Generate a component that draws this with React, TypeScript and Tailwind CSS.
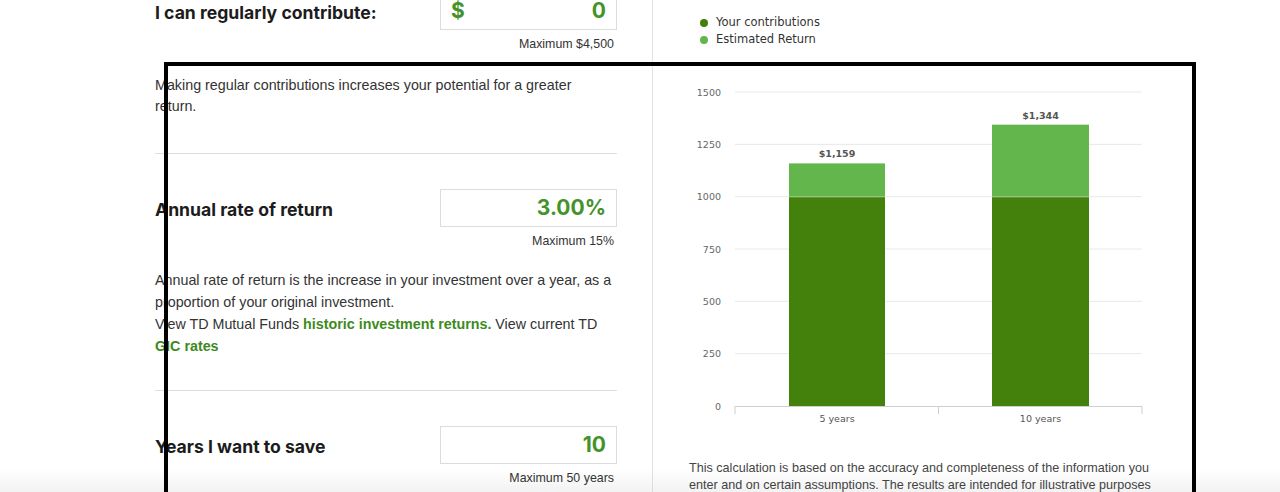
const GREEN_DARK = '#43800c';
const GREEN_LIGHT = '#62b64b';

const yTicks = [0, 250, 500, 750, 1000, 1250, 1500];
const zeroY = 326;
const scale = 52.33 / 250;
const bars = [
  { label: '5 years', total: 1159, contrib: 1000, x: 110, w: 96, center: 158, text: '$1,159' },
  { label: '10 years', total: 1344, contrib: 1000, x: 313, w: 97, center: 361.5, text: '$1,344' },
];

function InputRow({ label, value, prefix }: { label: string; value: string; prefix?: string }) {
  return (
    <div className="flex items-center justify-between">
      <h3 className="pt-[4px] text-[17.6px] font-bold text-[#1c1c1c]" style={{ fontFamily: 'Inter, "Noto Sans", sans-serif' }}>
        {label}
      </h3>
      <div className="flex h-[38px] w-[177px] items-center justify-between border border-[#dcdcdc] bg-white px-[10px]">
        <span className="text-[21px] font-bold text-[#44922a]" style={{ fontFamily: 'Inter, sans-serif' }}>{prefix ?? ''}</span>
        <span className="text-[21px] font-bold text-[#44922a]" style={{ fontFamily: 'Inter, sans-serif' }}>{value}</span>
      </div>
    </div>
  );
}

function MaxNote({ children }: { children: React.ReactNode }) {
  return (
    <p className="mt-[6px] pr-[3px] text-right text-[12.4px] leading-4 text-[#333]">{children}</p>
  );
}

function Chart() {
  return (
    <svg width="480" height="350" className="block" style={{ fontFamily: '"DejaVu Sans", Verdana, sans-serif' }}>
      {yTicks.map((t) => {
        const y = zeroY - t * scale;
        return (
          <g key={t}>
            {t > 0 && <line x1={56} x2={463} y1={y} y2={y} stroke="#e8e8e8" strokeWidth={1} />}
            <text x={42} y={y + 3.5} textAnchor="end" fontSize="9.5" fill="#666">{t}</text>
          </g>
        );
      })}
      {bars.map((b) => {
        const top = zeroY - b.total * scale;
        const mid = zeroY - b.contrib * scale;
        return (
          <g key={b.label}>
            <rect x={b.x} y={top} width={b.w} height={mid - top} fill={GREEN_LIGHT} />
            <rect x={b.x} y={mid + 0.5} width={b.w} height={zeroY - mid - 0.5} fill={GREEN_DARK} />
            <text x={b.center} y={top - 6} textAnchor="middle" fontSize="9.5" fontWeight="600" fill="#555">{b.text}</text>
            <text x={b.center} y={342} textAnchor="middle" fontSize="9.5" fill="#555">{b.label}</text>
          </g>
        );
      })}
      <line x1={56} x2={463} y1={zeroY + 0.5} y2={zeroY + 0.5} stroke="#cfcfcf" />
      {[56, 259.5, 463].map((x) => (
        <line key={x} x1={x} x2={x} y1={zeroY} y2={zeroY + 8} stroke="#cfcfcf" />
      ))}
    </svg>
  );
}

export default function App() {
  return (
    <div className="relative h-[492px] w-full overflow-hidden bg-white" style={{ fontFamily: '"Liberation Sans", Arial, sans-serif' }}>
      <div className="-mt-2 flex pl-[155px]">
        {/* Left: inputs */}
        <div className="w-[462px] shrink-0">
          <InputRow label="I can regularly contribute:" value="0" prefix="$" />
          <MaxNote>Maximum $4,500</MaxNote>
          <p className="mt-[23px] w-[458px] text-[14.3px] leading-[21px] text-[#333]">
            Making regular contributions increases your potential for a greater return.
          </p>
          <div className="mt-[36px] border-t border-[#dedede]" />

          <div className="mt-[35px]">
            <InputRow label="Annual rate of return" value="3.00%" />
          </div>
          <MaxNote>Maximum 15%</MaxNote>
          <p className="mt-[20px] w-[458px] text-[14.3px] leading-[22px] text-[#333]">
            Annual rate of return is the increase in your investment over a year, as a proportion of your original investment.
            <br />
            View TD Mutual Funds <a className="font-bold text-[#3d8a1d]">historic investment returns.</a> View current TD{' '}
            <a className="font-bold text-[#3d8a1d]">GIC rates</a>
          </p>
          <div className="mt-[33px] border-t border-[#dedede]" />

          <div className="mt-[35px]">
            <InputRow label="Years I want to save" value="10" />
          </div>
          <MaxNote>Maximum 50 years</MaxNote>
        </div>

        {/* Right: chart */}
        <div className="ml-[35px] h-[520px] border-l border-[#e4e4e4] pl-[36px] pt-[22px]">
          <ul className="text-[11.5px] leading-[17px] text-[#333]" style={{ fontFamily: '"DejaVu Sans", Verdana, sans-serif' }}>
            <li className="flex items-center gap-[8px] pl-[11px]">
              <span className="h-[8px] w-[8px] rounded-full bg-[#43800c]" />
              Your contributions
            </li>
            <li className="flex items-center gap-[8px] pl-[11px]">
              <span className="h-[8px] w-[8px] rounded-full bg-[#62b64b]" />
              Estimated Return
            </li>
          </ul>
          <div className="-ml-[10px] mt-[32px]">
            <Chart />
          </div>
          <p className="mt-[30px] w-[470px] text-[12.6px] leading-[17px] text-[#444]">
            This calculation is based on the accuracy and completeness of the information you enter and on certain assumptions. The results are intended for illustrative purposes only.
          </p>
        </div>
      </div>

      {/* annotation frame */}
      <div className="pointer-events-none absolute left-[164px] top-[62px] h-[480px] w-[1032px] border-4 border-black" />
      <div className="pointer-events-none absolute bottom-0 left-0 h-[24px] w-full bg-gradient-to-b from-transparent to-[#0000000d]" />
    </div>
  );
}
